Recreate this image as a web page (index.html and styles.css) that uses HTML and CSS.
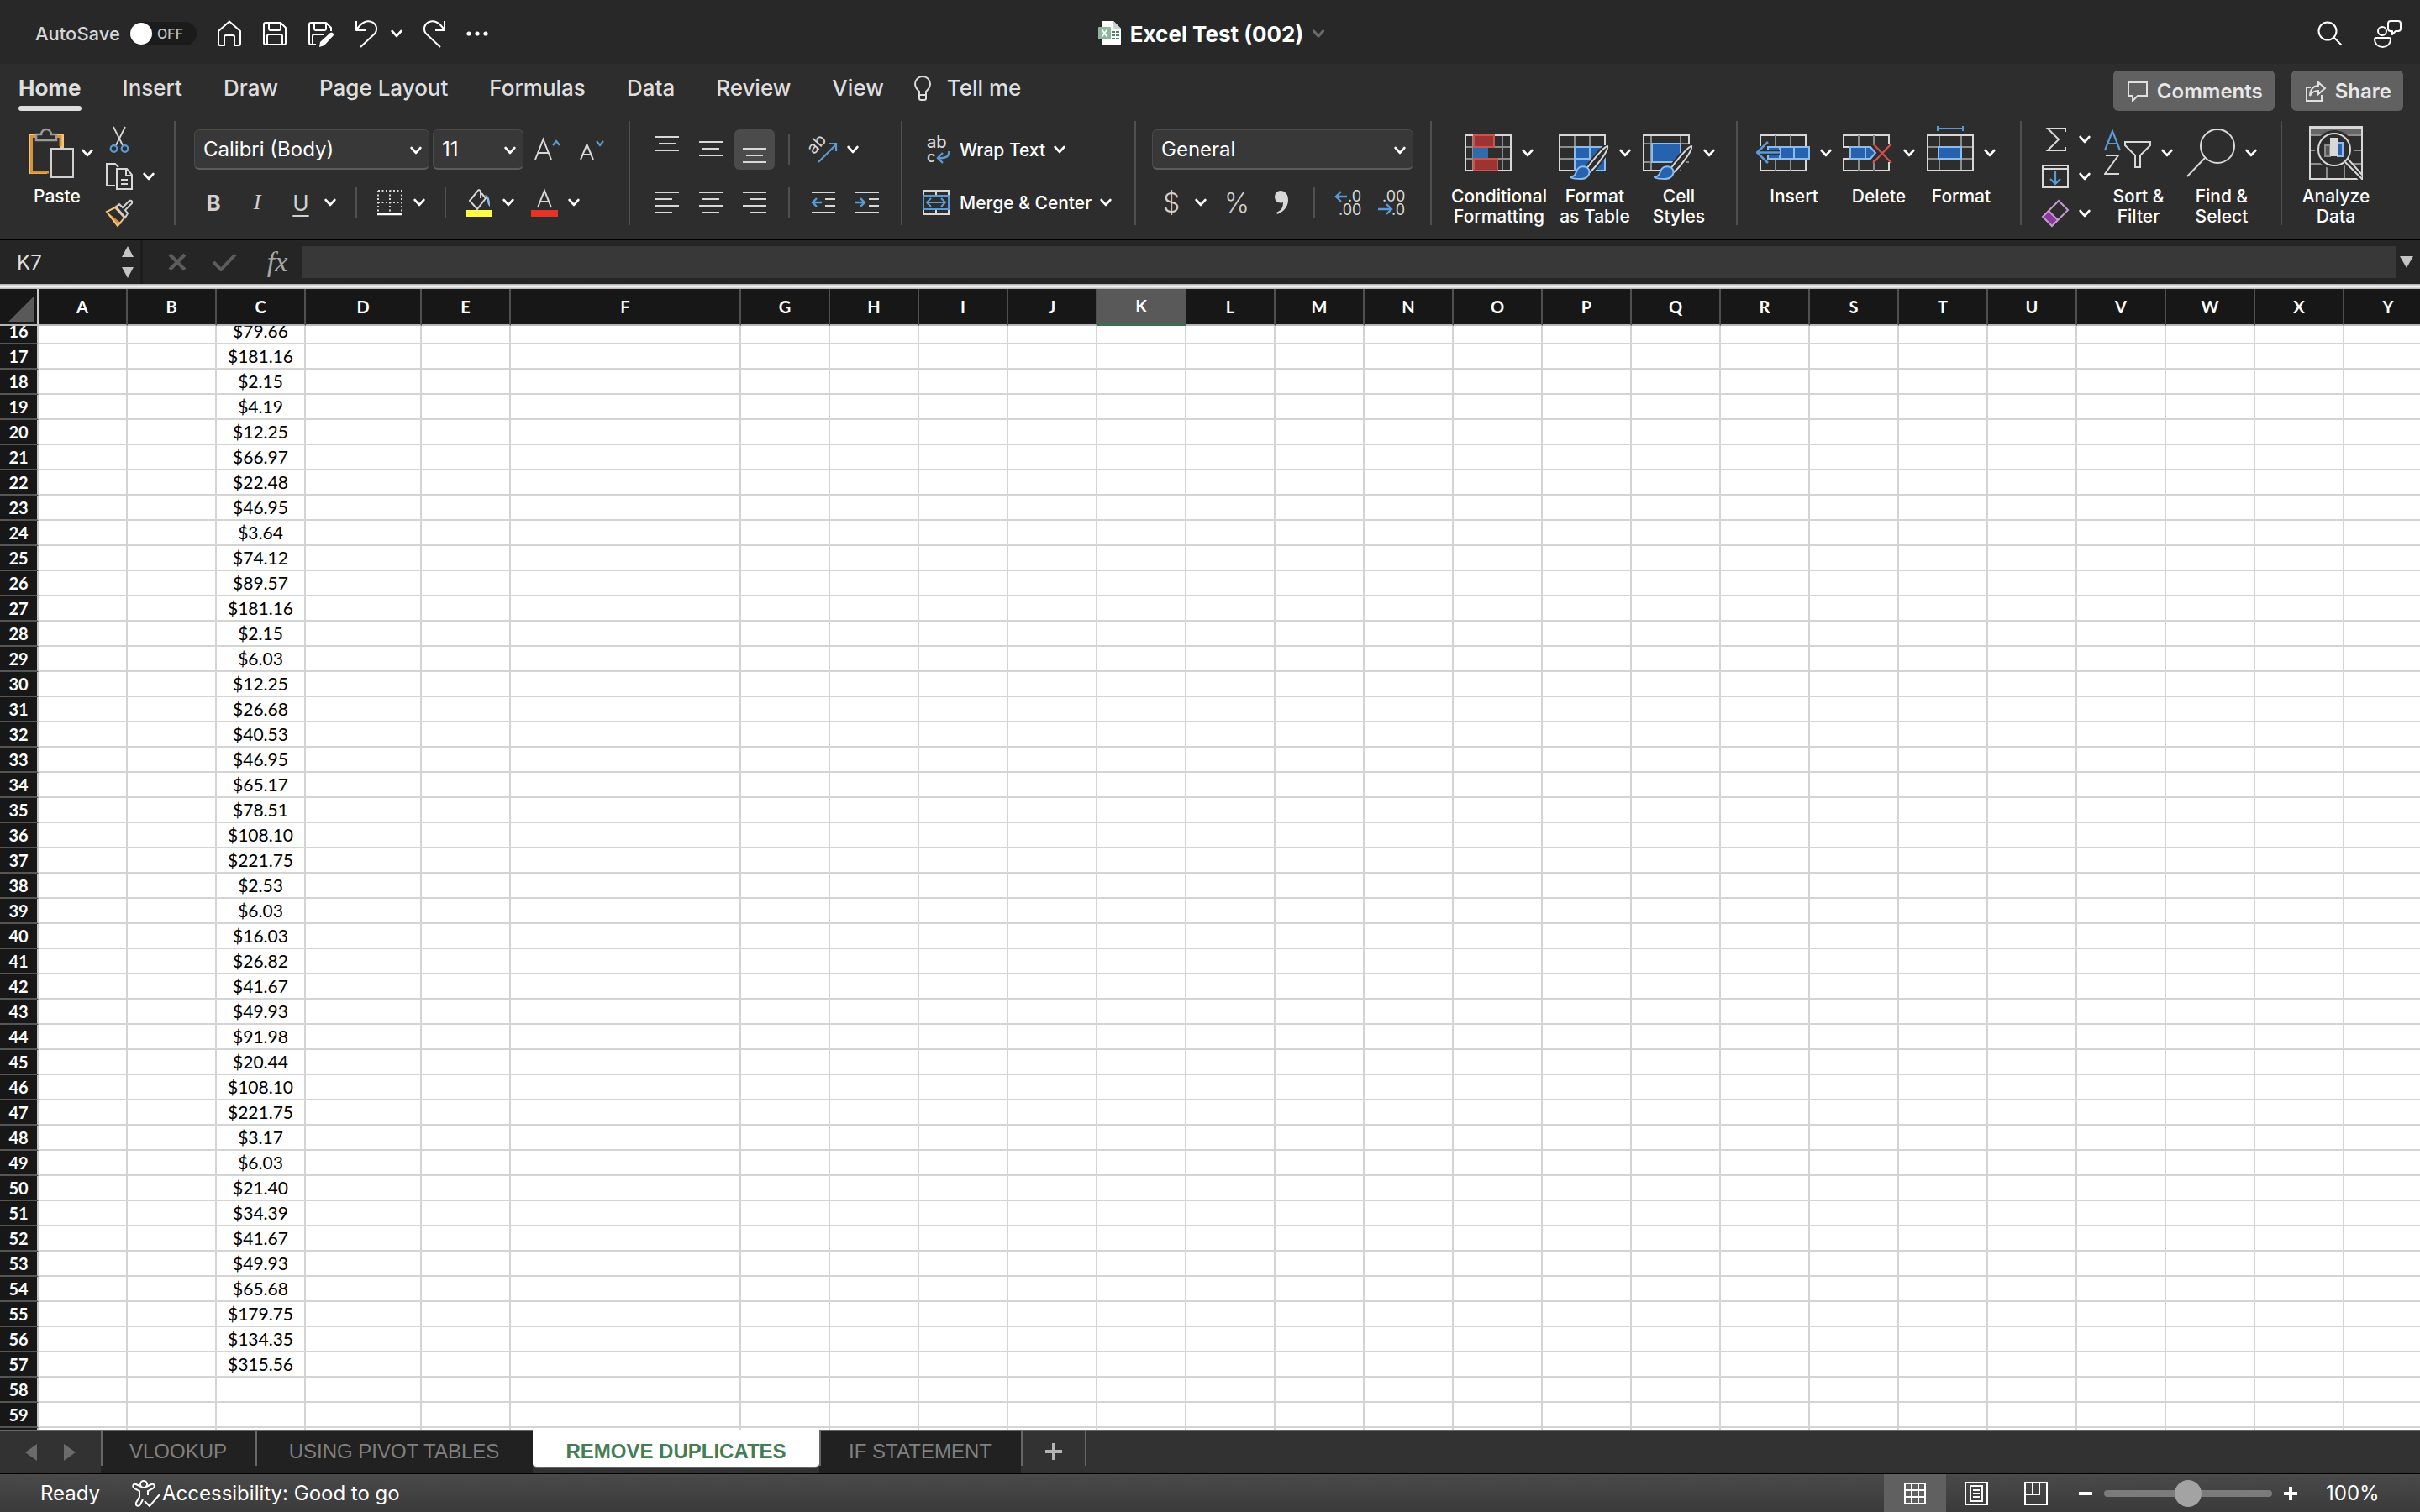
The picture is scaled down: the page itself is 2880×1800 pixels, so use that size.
FILE: index.html
```html
<!DOCTYPE html>
<html lang="en">
<head>
    <meta charset="UTF-8">
    <meta name="viewport" content="width=device-width, initial-scale=1.0">
    <title>Excel Test (002)</title>
    <link rel="stylesheet" href="styles.css">
</head>
<body>
    <!-- Shared shapes -->
    <svg class="defs" aria-hidden="true">
        <symbol id="chev" viewBox="0 0 12 8"><path d="M1.5 1.5 6 6.5l4.500-5" fill="none" stroke="currentColor" stroke-width="2.400" stroke-linecap="round" stroke-linejoin="round"/></symbol>
        <symbol id="paintbrush" viewBox="0 0 48 42">
            <path d="M45 1c-4 0-20 20-25 27l4 4C31 26 47 6 45 1z" fill="#2d2d2d" stroke="#2d2d2d" stroke-width="6"/>
            <path d="M45 1c-4 0-20 20-25 27l4 4C31 26 47 6 45 1z" fill="#2d2d2d" stroke="#d8d8d8" stroke-width="2"/>
            <path d="M1 38c6-1 6-5 8-9 3-5 11-5 14 0 2 6-3 11-9 11-5 0-10 0-13-2z" fill="#2662b0" stroke="#8cbcea" stroke-width="2"/>
        </symbol>
    </svg>

    <header class="titlebar">
        <div class="quick">
            <label class="autosave" for="autosave">AutoSave</label>
            <span class="toggle"><input type="checkbox" id="autosave"><span>OFF</span></span>
            <button class="qbtn" aria-label="Home"><svg width="30" height="32" viewBox="0 0 30 32"><path d="M2 13 15 1.500 28 13v15q0 2-2 2h-5V20q0-2-2-2h-8q-2 0-2 2v10H4q-2 0-2-2z"/></svg></button>
            <button class="qbtn" aria-label="Save"><svg width="30" height="32" viewBox="0 0 30 32"><path d="M4 3h18l6 6v18q0 2-2 2H4q-2 0-2-2V5q0-2 2-2zM8 3v7q0 2 2 2h10q2 0 2-2V3M6 29V19q0-2 2-2h14q2 0 2 2v10"/></svg></button>
            <button class="qbtn" aria-label="Save As"><svg width="32" height="32" viewBox="0 0 32 32"><path d="M10 29H4q-2 0-2-2V5q0-2 2-2h18l6 6v4M8 3v7q0 2 2 2h10q2 0 2-2V3M6 29V19q0-2 2-2h12"/><path d="M27 15q4-1 4 3L20 30l-6 2 1-6z" fill="#fff" stroke="none"/></svg></button>
            <span class="undo">
                <button class="qbtn" aria-label="Undo"><svg width="28" height="34" viewBox="0 0 28 34"><path d="M2 2v11h11M2 13C8 3 15 1 20 3c6 2 8 9 4 14L7 33"/></svg></button>
                <button class="qbtn" aria-label="Undo list"><svg width="14" height="10"><use href="#chev"/></svg></button>
            </span>
            <button class="qbtn" aria-label="Redo"><svg width="28" height="34" viewBox="0 0 28 34"><path d="M26 2v11H15M26 13C20 3 13 1 8 3 2 5 0 12 4 17l17 16"/></svg></button>
            <button class="qbtn" aria-label="More"><svg width="26" height="8" viewBox="0 0 26 8"><g fill="#fff" stroke="none"><circle cx="3" cy="4" r="2.600"/><circle cx="13" cy="4" r="2.600"/><circle cx="23" cy="4" r="2.600"/></g></svg></button>
        </div>
        <div class="doc">
            <svg width="28" height="32" viewBox="0 0 28 32">
                <path d="M4 1h14l9 9v20H4z" fill="#fff"/><path d="M18 1v9h9z" fill="#cfd3d0"/>
                <path d="M16 13h4v2h-4zm5 0h4v2h-4zm-5 4h4v2h-4zm5 0h4v2h-4zm-5 4h4v2h-4zm5 0h4v2h-4z" fill="#4f8563"/>
                <rect x="0" y="8" width="15" height="15" rx="1" fill="#8db79a"/><path d="m4.500 11.500 6 8m0-8-6 8" stroke="#fff" stroke-width="2"/>
            </svg>
            <h1>Excel Test (002)</h1>
            <svg class="dim" width="16" height="10"><use href="#chev"/></svg>
        </div>
        <div class="title-right">
            <button class="qbtn" aria-label="Search"><svg width="30" height="30" viewBox="0 0 30 30"><circle cx="12" cy="12" r="10.500"/><path d="m19.500 19.500 9 9"/></svg></button>
            <button class="qbtn" aria-label="Account"><svg width="34" height="34" viewBox="0 0 34 34"><circle cx="11" cy="14" r="5"/><path d="M4 22h15q2 0 2 2c0 5-4 9-9.500 9S2 29 2 24q0-2 2-2zM21 2h9q3 0 3 3v6q0 3-3 3h-3l-4 4v-4h-2q-3 0-3-3V5q0-3 3-3z"/></svg></button>
        </div>
    </header>

    <nav class="tabs">
        <a class="active" href="#home">Home</a>
        <a href="#insert">Insert</a>
        <a href="#draw">Draw</a>
        <a href="#layout">Page Layout</a>
        <a href="#formulas">Formulas</a>
        <a href="#data">Data</a>
        <a href="#review">Review</a>
        <a href="#view">View</a>
        <a class="tell" href="#tell"><svg width="22" height="32" viewBox="0 0 22 32" fill="none" stroke="#ddd" stroke-width="2"><path d="M7 24v-4C4 17 2 15 2 11a9 9 0 0 1 18 0c0 4-2 6-5 9v4zM7 24v4q0 2 2 2h4q2 0 2-2v-4"/></svg>Tell me</a>
        <div class="tab-actions">
            <button><svg width="26" height="26" viewBox="0 0 26 26"><path d="M2 2h22v16H13l-6 6v-6H2z"/></svg>Comments</button>
            <button><svg width="26" height="26" viewBox="0 0 26 26"><path d="M7 8H2v16h18v-7M16 2l8 7-8 7v-4c-5 0-8 2-10 6 0-7 4-12 10-12z"/></svg>Share</button>
        </div>
    </nav>

    <section class="ribbon">
        <div class="group g-clip">
            <button class="big paste">
                <span class="pic"><svg width="54" height="60" viewBox="0 0 54 60"><path d="M22 53H2V10h38v14" fill="none" stroke="#f3c57c" stroke-width="4"/><path d="M24 53H3.500V10.500H38V22" fill="none" stroke="#d9923a" stroke-width="3"/><path d="M9 15V8h6c1-8 11-8 12 0h6v7z" fill="#2d2d2d" stroke="#9a9a9a" stroke-width="2.500"/><path d="M27 25h26v34H27z" fill="#2d2d2d" stroke="#d0d0d0" stroke-width="2"/></svg><svg class="chev"><use href="#chev"/></svg></span>
                <span class="label">Paste</span>
            </button>
            <div class="stack">
                <button aria-label="Cut"><svg class="ic" viewBox="0 0 32 32"><path d="m9 1 11 22M23 1 12 23" stroke="#d8d8d8" stroke-width="1.800"/><circle cx="9.500" cy="27" r="3.800" stroke="#5b9bd5" stroke-width="2.200"/><circle cx="22.500" cy="27" r="3.800" stroke="#5b9bd5" stroke-width="2.200"/></svg></button>
                <button aria-label="Copy"><svg class="ic" viewBox="0 0 32 32"><path d="M11 27H1V1h10l4 4M13 7h12l6 7v17H13zM24 7v8h7M18 20h8M18 25h8"/></svg><svg class="chev"><use href="#chev"/></svg></button>
                <button aria-label="Format Painter"><svg class="ic" viewBox="0 0 32 32"><path d="m2 15 17 13-6 3z" fill="#d9923a" stroke="none"/><path d="m11 9 11 12-8 10L1 14z" stroke="#f3c57c"/><path d="m12 8 4-3 4 4 8-8q4-1 3 3l-8 8 3 4-3 5z" stroke="#d0d0d0" fill="#2d2d2d"/></svg></button>
            </div>
        </div>

        <div class="group g-font rows">
            <div class="row tight">
                <span class="select s-font"><select aria-label="Font"><option>Calibri (Body)</option></select><svg class="chev"><use href="#chev"/></svg></span>
                <span class="select s-size"><select aria-label="Font size"><option>11</option></select><svg class="chev"><use href="#chev"/></svg></span>
                <button class="sq" aria-label="Grow font"><svg class="ic" viewBox="0 0 32 32"><path d="M2 28 11.500 4 21 28M5 20h13"/><path d="m23 11 4-5 4 5" stroke="#5b9bd5" stroke-width="2.200"/></svg></button>
                <button class="sq" aria-label="Shrink font"><svg class="ic" viewBox="0 0 32 32"><path d="M4 28 11.500 10 19 28M6 22h11"/><path d="m23 6 4 5 4-5" stroke="#5b9bd5" stroke-width="2.200"/></svg></button>
            </div>
            <div class="row inset">
                <button class="txt b">B</button>
                <button class="txt i">I</button>
                <button class="txt u"><span>U</span><svg class="chev"><use href="#chev"/></svg></button>
                <i class="sep"></i>
                <button aria-label="Borders"><svg class="ic" viewBox="0 0 32 32"><path d="M2 2h28M2 16h28M2 2v26M16 2v26M30 2v26" stroke-dasharray="2 2.500"/><path d="M1 30h30" stroke="#fff" stroke-width="2.500"/></svg><svg class="chev"><use href="#chev"/></svg></button>
                <i class="sep"></i>
                <button aria-label="Fill colour"><svg class="ic" viewBox="0 0 32 32"><path d="M18 11V3q-2-4-4 0L5 14l9 10 10-13-5-6"/><path d="M23 7c6 1 6 8 6 14-4-3-2-9-6-14z" fill="#8cbcea" stroke="none"/><path d="M0 25h32v8H0z" fill="#fffb45" stroke="none"/></svg><svg class="chev"><use href="#chev"/></svg></button>
                <button aria-label="Font colour"><svg class="ic" viewBox="0 0 32 32"><path d="m8 22 8-20 8 20M11 15h10"/><path d="M0 25h32v8H0z" fill="#e63323" stroke="none"/></svg><svg class="chev"><use href="#chev"/></svg></button>
            </div>
        </div>

        <div class="group g-align rows">
            <div class="row tight">
                <button class="sq" aria-label="Top align"><svg class="ic" viewBox="0 0 32 32"><path d="M2 1h28M6 9h20M2 17h28"/></svg></button>
                <button class="sq" aria-label="Middle align"><svg class="ic" viewBox="0 0 32 32"><path d="M2 7h28M6 15h20M2 23h28"/></svg></button>
                <button class="sq on" aria-label="Bottom align"><svg class="ic" viewBox="0 0 32 32"><path d="M2 15h28M6 23h20M2 31h28"/></svg></button>
                <i class="sep"></i>
                <button class="pad" aria-label="Orientation"><svg class="ic" viewBox="0 0 32 32"><text x="1" y="18" transform="rotate(-48 8 16)" font-size="20">ab</text><path d="m10 31 21-21M22 9h9v9" stroke="#5b9bd5" stroke-width="2.200"/></svg><svg class="chev"><use href="#chev"/></svg></button>
            </div>
            <div class="row tight">
                <button class="sq" aria-label="Align left"><svg class="ic" viewBox="0 0 32 32"><path d="M2 4h28M2 12h20M2 20h28M2 28h20"/></svg></button>
                <button class="sq" aria-label="Center"><svg class="ic" viewBox="0 0 32 32"><path d="M2 4h28M6 12h20M2 20h28M6 28h20"/></svg></button>
                <button class="sq" aria-label="Align right"><svg class="ic" viewBox="0 0 32 32"><path d="M2 4h28M10 12h20M2 20h28M10 28h20"/></svg></button>
                <i class="sep"></i>
                <button class="sq" aria-label="Decrease indent"><svg class="ic" viewBox="0 0 32 32"><path d="M2 4h28M18 12h12M18 20h12M2 28h28"/><path d="M14 16H3m5-5-5 5 5 5" stroke="#5b9bd5" stroke-width="2.400"/></svg></button>
                <button class="sq" aria-label="Increase indent"><svg class="ic" viewBox="0 0 32 32"><path d="M2 4h28M18 12h12M18 20h12M2 28h28"/><path d="M2 16h11m-5-5 5 5-5 5" stroke="#5b9bd5" stroke-width="2.400"/></svg></button>
            </div>
        </div>

        <div class="group g-wrap rows">
            <button class="wide"><svg class="ic" viewBox="0 0 32 32"><text x="5" y="14" font-size="20">ab</text><text x="5" y="31" font-size="18">c</text><path d="M31 18c1 6-3 9-13 8m6-6-6 6 6 6" stroke="#5b9bd5" stroke-width="2.400"/></svg>Wrap Text<svg class="chev"><use href="#chev"/></svg></button>
            <button class="wide"><svg class="ic" viewBox="0 0 32 32"><path d="M1 2h30v28H1zM16 2v6M16 24v6"/><path d="M1 8h30v16H1z" stroke="#5b9bd5" fill="#2d2d2d"/><path d="M6 16h20m-16-5-5 5 5 5m12-10 5 5-5 5" stroke="#5b9bd5"/></svg>Merge &amp; Center<svg class="chev"><use href="#chev"/></svg></button>
        </div>

        <div class="group g-num rows">
            <span class="select"><select aria-label="Number format"><option>General</option></select><svg class="chev"><use href="#chev"/></svg></span>
            <div class="row inset">
                <button class="txt cur"><span>$</span><svg class="chev"><use href="#chev"/></svg></button>
                <button class="txt cur">%</button>
                <button aria-label="Comma style"><svg class="ic" viewBox="0 0 32 32"><path d="M9 9a7 7 0 0 1 7-7c5 0 9 4 9 11 0 8-5 14-13 17l-1-2c5-2 8-5 8-12-6 2-10-2-10-7z" fill="#d8d8d8" stroke="none"/></svg></button>
                <i class="sep"></i>
                <button aria-label="Increase decimal"><svg class="ic" viewBox="0 0 32 32"><text x="16" y="15" font-size="18">.0</text><text x="5" y="31" font-size="18">.00</text><path d="M15 9H2m6-6-6 6 6 6" stroke="#5b9bd5" stroke-width="2.400"/></svg></button>
                <button aria-label="Decrease decimal"><svg class="ic" viewBox="0 0 32 32"><text x="5" y="15" font-size="18">.00</text><text x="16" y="31" font-size="18">.0</text><path d="M0 24h16m-6-6 6 6-6 6" stroke="#5b9bd5" stroke-width="2.400"/></svg></button>
            </div>
        </div>

        <div class="group g-styles">
            <button class="big">
                <span class="pic"><svg width="56" height="44" viewBox="0 0 56 44"><path d="M1 15h54M1 29h54M10 1v42M45 1v42" stroke="#8c8c8c" stroke-width="2"/><path d="M1 1h54v42H1z" stroke="#d8d8d8"/><path d="M11 1h24v14H11zM11 29h28v14H11z" fill="#9c3532" stroke="#d0514c"/><path d="M10 16h18v12H10z" fill="#2f6cad" stroke="none"/><path d="M28 16h16v12H28z" fill="#2d2d2d" stroke="none"/></svg><svg class="chev"><use href="#chev"/></svg></span>
                <span class="label">Conditional<br>Formatting</span>
            </button>
            <button class="big">
                <span class="pic"><svg width="60" height="64" viewBox="0 0 60 64"><path d="M1 25h54M1 39h54M19 11v42M37 11v42" stroke="#8c8c8c" stroke-width="2"/><path d="M1 11h54v42H1z" stroke="#d8d8d8"/><path d="M19 25h36v28H19z" fill="#2662b0" stroke="#8cbcea"/><path d="M19 39h36M37 25v28" stroke="#8cbcea"/><use href="#paintbrush" x="13" y="23" width="48" height="42"/></svg><svg class="chev"><use href="#chev"/></svg></span>
                <span class="label">Format<br>as Table</span>
            </button>
            <button class="big">
                <span class="pic"><svg width="60" height="64" viewBox="0 0 60 64"><path d="M1 21h54M1 43h54M10 11v42M45 11v42" stroke="#8c8c8c" stroke-width="2"/><path d="M55 22V11H1v42h24" stroke="#d8d8d8"/><path d="M11 21h34v22H11z" fill="#2662b0" stroke="#8cbcea"/><use href="#paintbrush" x="13" y="23" width="48" height="42"/></svg><svg class="chev"><use href="#chev"/></svg></span>
                <span class="label">Cell<br>Styles</span>
            </button>
        </div>

        <div class="group g-cells">
            <button class="big">
                <span class="pic"><svg width="64" height="44" viewBox="0 0 64 44"><path d="M5 14V1h54v13M5 30v13h54V30" stroke="#d8d8d8"/><path d="M23 1v42M41 1v42" stroke="#8c8c8c"/><path d="M14 15h49v14H14z" fill="#2662b0" stroke="#8cbcea"/><path d="M28 15v14M45 15v14" stroke="#8cbcea"/><path d="M28 19H8v5h20z" fill="#2d2d2d" stroke="none"/><path d="M28 21.500H2M14 9 1 21.500 14 34" stroke="#5b9bd5" stroke-width="2.600"/></svg><svg class="chev"><use href="#chev"/></svg></span>
                <span class="label">Insert</span>
            </button>
            <button class="big">
                <span class="pic"><svg width="60" height="44" viewBox="0 0 60 44"><path d="M10 15H1V1h54v10M10 29H1v14h54V33" stroke="#d8d8d8"/><path d="M19 1v14M37 1v12M19 29v14M37 31v12" stroke="#8c8c8c"/><path d="M9 15h24l6 7-6 7H9z" fill="#2662b0" stroke="#8cbcea"/><path d="M27 15v14" stroke="#8cbcea"/><path d="m36 11 22 23M58 11 36 34" stroke="#d0514c" stroke-width="2.400"/></svg><svg class="chev"><use href="#chev"/></svg></span>
                <span class="label">Delete</span>
            </button>
            <button class="big">
                <span class="pic"><svg width="56" height="64" viewBox="0 0 56 64"><path d="M13 3h30M13 0v6M43 0v6" stroke="#5b9bd5"/><path d="M1 25h54M1 39h54M15 11v42M41 11v42" stroke="#8c8c8c"/><path d="M1 11h54v42H1z" stroke="#d8d8d8"/><path d="M14 25h27v14H14z" fill="#2662b0" stroke="#8cbcea"/></svg><svg class="chev"><use href="#chev"/></svg></span>
                <span class="label">Format</span>
            </button>
        </div>

        <div class="group g-edit">
            <div class="stack">
                <button aria-label="AutoSum"><svg class="ic" viewBox="0 0 32 32"><path d="M28 7V3H7l13 13L7 29h21v-4"/></svg><svg class="chev"><use href="#chev"/></svg></button>
                <button aria-label="Fill"><svg class="ic" viewBox="0 0 32 32"><path d="M1 3h30v26H1zM1 7h30"/><path d="M16 10v15m-6-6 6 6 6-6" stroke="#5b9bd5" stroke-width="2.200"/></svg><svg class="chev"><use href="#chev"/></svg></button>
                <button aria-label="Clear"><svg class="ic" viewBox="0 0 32 32"><path d="m8 13 11 11-7 7L1 21z" fill="#8a3a9c" stroke="none"/><path d="M20 1 31 12 12 31 1 20zM8 13l11 11" stroke="#c79ad2"/></svg><svg class="chev"><use href="#chev"/></svg></button>
            </div>
            <button class="big">
                <span class="pic"><svg width="56" height="56" viewBox="0 0 56 56"><path d="m1 25 9-23 9 23M4 17h12" stroke="#5b9bd5" stroke-width="2.200"/><path d="M2 31h15L1 53h17M25 15h30v4L43 31v14h-6V31L25 19z"/></svg><svg class="chev"><use href="#chev"/></svg></span>
                <span class="label">Sort &amp;<br>Filter</span>
            </button>
            <button class="big">
                <span class="pic"><svg width="58" height="60" viewBox="0 0 58 60"><circle cx="37" cy="22" r="20"/><path d="M22 36 1 58"/></svg><svg class="chev"><use href="#chev"/></svg></span>
                <span class="label">Find &amp;<br>Select</span>
            </button>
        </div>

        <div class="group g-analyze">
            <button class="big">
                <span class="pic"><svg width="64" height="64" viewBox="0 0 64 64"><path d="M1 2h62v8H1z" fill="#666"/><path d="M1 11h62M1 29h62M1 45h62M21 45v18M42 45v18" stroke="#8c8c8c"/><path d="M1 1h62v62H1z" stroke="#d8d8d8"/><circle cx="30" cy="28" r="23" fill="#2d2d2d" stroke="none"/><path d="m44 42 19 21" stroke="#2d2d2d" stroke-width="8"/><circle cx="30" cy="28" r="19" stroke="#d8d8d8"/><path d="m43 43 20 20 1-4-18-20" stroke="#d8d8d8"/><path d="M19 23h6v13h-6z" fill="#555" stroke="#8c8c8c"/><path d="M34 20h6v16h-6z" fill="#2662b0" stroke="#8cbcea"/><path d="M25 14h9v22h-9z" fill="#d8d8d8" stroke="none"/></svg></span>
                <span class="label">Analyze<br>Data</span>
            </button>
        </div>
    </section>

    <section class="formula">
        <div class="namebox">
            <input type="text" value="K7" aria-label="Name box">
            <svg width="16" height="38" viewBox="0 0 16 38" fill="#c4c4c4"><path d="M1 13 8 0l7 13zM1 25l7 13 7-13z"/></svg>
        </div>
        <button aria-label="Cancel"><svg width="22" height="22" viewBox="0 0 22 22"><path d="m2 2 18 18M20 2 2 20"/></svg></button>
        <button aria-label="Enter"><svg width="30" height="22" viewBox="0 0 30 22"><path d="m2 11 9 9L28 2"/></svg></button>
        <button class="fx" aria-label="Insert function">fx</button>
        <input class="entry" type="text" aria-label="Formula">
        <button class="expand" aria-label="Expand"><svg width="16" height="14" viewBox="0 0 16 14"><path d="M0 0h16L8 14z" fill="#c4c4c4" stroke="none"/></svg></button>
    </section>

    <main class="sheet" id="sheet">
        <table>
            <colgroup id="cols"></colgroup>
            <thead><tr id="letters"></tr></thead>
            <tbody id="rows"></tbody>
        </table>
    </main>

    <nav class="sheets">
        <div class="arrows">
            <button aria-label="Previous sheet"><svg width="14" height="20"><path d="M14 0v20L0 10z" fill="#6b6b6b"/></svg></button>
            <button aria-label="Next sheet"><svg width="14" height="20"><path d="M0 0v20l14-10z" fill="#6b6b6b"/></svg></button>
        </div>
        <a class="t1" href="#vlookup">VLOOKUP</a>
        <a class="t2" href="#pivot">USING PIVOT TABLES</a>
        <a class="t3 active" href="#duplicates">REMOVE DUPLICATES</a>
        <a class="t4" href="#if">IF STATEMENT</a>
        <button class="add" aria-label="Add sheet"><svg width="20" height="20"><path d="M10 0v20M0 10h20" stroke="#b4b4b4" stroke-width="4"/></svg></button>
    </nav>

    <footer class="status">
        <span class="ready">Ready</span>
        <svg width="34" height="32" viewBox="0 0 34 32" fill="none" stroke="#fff" stroke-width="2"><circle cx="14" cy="5" r="4"/><path d="M11 8 5 5c-4-1-5 3-2 5l6 3v7L5 27c-1 4 3 5 5 2l3-6M17 8l6-3c4-1 5 3 2 5l-6 3v5M15 25l6 6L33 17"/></svg>
        <span>Accessibility: Good to go</span>
        <div class="views">
            <button class="on" aria-label="Normal view"><svg width="28" height="28"><path d="M2 2h24v24H2zM10 2v24M18 2v24M2 10h24M2 18h24"/></svg></button>
            <button aria-label="Page layout view"><svg width="28" height="28"><path d="M1 1h26v26H1zM7 5h14v18H7zM10 10h8M10 14h8M10 18h8"/></svg></button>
            <button aria-label="Page break view"><svg width="28" height="28"><path d="M1 1h26v26H1zM1 15h17V1M10 1v14"/></svg></button>
        </div>
        <button class="zoom" aria-label="Zoom out"><svg width="16" height="16"><path d="M0 8h16"/></svg></button>
        <input type="range" min="0" max="100" value="50" aria-label="Zoom">
        <button class="zoom" aria-label="Zoom in"><svg width="16" height="16"><path d="M0 8h16M8 0v16"/></svg></button>
        <span class="percent">100%</span>
    </footer>
    <script src="script.js"></script>
</body>
</html>
```

FILE: styles.css
```css
/* Global styles */
* {
    box-sizing: border-box;
}
body {
    margin: 0;
    height: 100vh;
    display: flex;
    flex-direction: column;
    overflow: hidden;
    background: #2d2d2d;
    color: #fff;
    font-family: Inter, "Liberation Sans", sans-serif;
    font-size: 24px;
}
button, input, select {
    font: inherit;
    color: inherit;
    background: none;
    border: 0;
    padding: 0;
    margin: 0;
}
a {
    color: inherit;
    text-decoration: none;
}
svg {
    display: block;
    flex: none;
}
.defs {
    position: absolute;
    width: 0;
    height: 0;
}

/* Title bar */
.titlebar {
    display: grid;
    grid-template-columns: 1fr auto 1fr;
    align-items: center;
    height: 76px;
    padding: 4px 22px 0 42px;
    background: #282828;
}
.quick, .doc, .title-right, .undo {
    display: flex;
    align-items: center;
}
.quick {
    gap: 24px;
}
.autosave {
    width: 100px;
    margin-right: -12px;
    font-size: 22px;
    font-weight: 500;
    color: #d6d6d6;
}
.toggle {
    display: flex;
    align-items: center;
    gap: 6px;
    width: 80px;
    height: 28px;
    padding-left: 1px;
    border-radius: 14px;
    background: #1b1b1b;
    font-size: 16px;
    font-weight: 500;
    color: #c4c4c4;
}
.toggle input {
    appearance: none;
    width: 26px;
    height: 26px;
    border-radius: 13px;
    background: #fff;
}
.qbtn svg {
    fill: none;
    stroke: #fff;
    stroke-width: 2;
    stroke-linejoin: round;
}
.undo {
    gap: 15px;
}
.doc {
    gap: 10px;
    padding-right: 16px;
}
.doc h1 {
    margin: 0;
    font-size: 26px;
    font-weight: 700;
}
.dim {
    color: #6a6a6a;
}
.title-right {
    justify-content: flex-end;
    gap: 36px;
}

/* Ribbon tabs */
.tabs {
    display: flex;
    gap: 49px;
    height: 56px;
    padding: 0 20px 0 22px;
    font-size: 26px;
    font-weight: 500;
    color: #dedede;
}
.tabs a {
    padding: 13px 0 5px;
    line-height: 32px;
    border-bottom: 6px solid transparent;
    white-space: nowrap;
}
.tabs a.active {
    font-weight: 700;
    position: relative;
}
.tabs a.active::after {
    content: '';
    position: absolute;
    left: 0;
    right: 0;
    bottom: -6px;
    height: 6px;
    border-radius: 3px;
    background: #dedede;
}
.tabs .tell {
    display: flex;
    gap: 18px;
    margin-left: -14px;
}
.tab-actions {
    display: flex;
    align-items: flex-end;
    gap: 20px;
    margin-left: auto;
}
.tab-actions button {
    display: flex;
    align-items: center;
    gap: 10px;
    height: 48px;
    padding: 0 14px 0 16px;
    border-radius: 6px;
    border-top: 1px solid #757575;
    background: #616161;
    color: #e8e8e8;
    font-size: 24px;
    font-weight: 600;
}
.tab-actions svg {
    fill: none;
    stroke: #e0e0e0;
    stroke-width: 2;
}

/* Ribbon */
.ribbon {
    display: flex;
    height: 154px;
    padding-top: 12px;
    border-bottom: 2px solid #000;
}
.group {
    display: flex;
    flex: none;
    align-items: flex-start;
    height: 124px;
    border-right: 2px solid #505050;
}
.rows {
    flex-direction: column;
    gap: 15px;
    padding-top: 10px;
}
.row {
    display: flex;
    align-items: center;
    height: 48px;
    gap: 20px;
}
.row.tight {
    gap: 4px;
}
.row.inset {
    padding-left: 7px;
}
.group button {
    display: flex;
    align-items: center;
    gap: 12px;
}
.ic {
    width: 32px;
    height: 32px;
    overflow: visible;
}
.group svg {
    fill: none;
    stroke: #d8d8d8;
    stroke-width: 2;
}
.group text {
    fill: #d8d8d8;
    stroke: none;
}
.group .chev {
    width: 14px;
    height: 10px;
    color: #fff;
}
.sep {
    width: 2px;
    height: 36px;
    margin: 0 3px;
    background: #505050;
}
.tight .sep {
    margin: 0 12px;
}
.group .sq {
    width: 48px;
    height: 48px;
    justify-content: center;
    border-radius: 6px;
}
.group .on {
    background: #4b4b4b;
}
.group .pad {
    padding-left: 8px;
}
.select {
    position: relative;
    display: flex;
    height: 48px;
}
.select select {
    appearance: none;
    width: 100%;
    padding: 0 10px;
    border: 1px solid #4a4a4a;
    border-bottom: 2px solid #5c5c5c;
    border-radius: 6px;
    background: #383838;
}
.select .chev {
    position: absolute;
    right: 9px;
    top: 20px;
}
.s-font {
    width: 280px;
}
.s-size {
    width: 108px;
}
.txt {
    min-width: 32px;
    justify-content: center;
    font-size: 26px;
    color: #d0d0d0;
}
.txt span {
    width: 32px;
    text-align: center;
}
.b {
    font-weight: 700;
}
.i {
    font-family: "Liberation Serif", serif;
    font-style: italic;
}
.u span {
    text-decoration: underline;
    text-underline-offset: 5px;
    text-decoration-thickness: 2px;
}
.cur {
    font-size: 32px;
    font-weight: 300;
}
.group .wide {
    height: 48px;
    gap: 12px;
    font-size: 21px;
    font-weight: 500;
    white-space: nowrap;
}
.wide .chev {
    margin-left: -2px;
}
.group .big {
    flex-direction: column;
    gap: 8px;
    padding-top: 6px;
    min-width: 84px;
}
.pic {
    display: flex;
    align-items: center;
    justify-content: center;
    gap: 12px;
    height: 64px;
}
.label {
    line-height: 24px;
    font-size: 21px;
    font-weight: 500;
    text-align: center;
    white-space: nowrap;
}
.stack button {
    height: 44px;
}
.group .paste {
    align-items: flex-start;
    min-width: 76px;
}
.paste .pic {
    gap: 9px;
}
.paste .label {
    padding-left: 6px;
}
.g-clip {
    width: 209px;
    padding-left: 34px;
    gap: 15px;
}
.g-font {
    width: 541px;
    padding-left: 22px;
}
.g-align {
    width: 324px;
    padding-left: 20px;
}
.g-wrap {
    width: 278px;
    padding-left: 24px;
}
.g-num {
    width: 352px;
    padding: 10px 20px 0 19px;
}
.g-num .select {
    width: 100%;
}
.g-styles {
    width: 364px;
    padding-left: 23px;
    gap: 14px;
}
.g-cells {
    width: 338px;
    padding-left: 22px;
    gap: 13px;
}
.g-edit {
    width: 310px;
    padding-left: 24px;
    gap: 15px;
}
.g-analyze {
    padding-left: 22px;
    border: 0;
}

/* Formula bar, with the light rule under it */
.formula {
    display: flex;
    align-items: center;
    height: 58px;
    padding-bottom: 6px;
    background: linear-gradient(#a8a8a8, #fff 50%, #b0b0b0) left bottom / 100% 6px no-repeat #252525;
}
.namebox {
    display: flex;
    align-items: center;
    width: 170px;
    height: 52px;
    padding: 0 7px 0 20px;
    border-right: 3px solid #1c1c1c;
    color: #e0e0e0;
}
.namebox input {
    flex: 1;
    min-width: 0;
}
.formula button {
    margin-left: 30px;
}
.formula button svg {
    fill: none;
    stroke: #5c5c5c;
    stroke-width: 4;
}
.formula .fx {
    width: 36px;
    font-family: "Liberation Serif", serif;
    font-style: italic;
    font-size: 34px;
    line-height: 40px;
    color: #a8a8a8;
}
.formula .entry {
    flex: 1;
    height: 38px;
    margin-left: 12px;
    background: #383838;
}
.formula .expand {
    margin: 0 8px 0 5px;
}

/* Grid */
.sheet {
    flex: 1;
    min-height: 0;
    overflow: auto;
    scrollbar-width: none;
    background: #fff;
    color: #000;
    font-family: Lato, "Liberation Sans", sans-serif;
    font-size: 21px;
}
.sheet table {
    table-layout: fixed;
    width: 0;
    border-collapse: separate;
    border-spacing: 0;
}
.sheet th, .sheet td {
    padding: 0;
    overflow: hidden;
    text-align: center;
}
.sheet td {
    height: 30px;
    line-height: 28px;
    border-right: 2px solid #d4d4d4;
    border-bottom: 2px solid #d4d4d4;
}
.sheet th {
    background: #171717;
    color: #fff;
    font-size: 20px;
    font-weight: 700;
}
.sheet thead th {
    position: sticky;
    top: 0;
    height: 44px;
    border-right: 2px solid #4f4f4f;
    border-bottom: 2px solid #b8b8b8;
}
.sheet tbody th {
    border-right: 2px solid #c8c8c8;
    border-bottom: 2px solid #555;
}
.sheet thead .corner {
    border-right-color: #c8c8c8;
}
.corner svg {
    margin: 6px 0 0 10px;
}
.sheet thead .picked {
    background: #595959;
    border-right-color: #595959;
    border-bottom: 4px solid #3f6e4c;
}

/* Sheet tabs */
.sheets {
    display: flex;
    height: 53px;
    border-top: 2px solid #666;
    border-bottom: 1px solid #000;
    background: #323232;
    font-family: "Liberation Sans", Arial, sans-serif;
    font-size: 24px;
    color: #808080;
}
.arrows {
    display: flex;
    align-items: center;
    gap: 32px;
    width: 120px;
    padding-left: 30px;
}
.sheets a {
    display: flex;
    justify-content: center;
    padding-top: 10px;
    line-height: 28px;
    background: linear-gradient(#666, #666) left top / 2px 41px no-repeat #212121;
    white-space: nowrap;
}
.t1 {
    width: 184px;
}
.t2 {
    width: 330px;
}
.sheets .t3 {
    position: relative;
    width: 341px;
    height: 46px;
    margin-top: -2px;
    padding-top: 12px;
    border-bottom: 2px solid #666;
    border-radius: 0 0 5px 5px;
    background: #fff;
    color: #437c55;
    font-weight: 700;
}
.t4 {
    width: 240px;
}
.add {
    display: flex;
    align-items: center;
    justify-content: center;
    width: 78px;
    height: 41px;
    padding-top: 6px;
    border-left: 2px solid #666;
    border-right: 2px solid #666;
}

/* Status bar */
.status {
    display: flex;
    align-items: center;
    height: 45px;
    padding: 0 48px;
    background: linear-gradient(#4a4a4a, #3a3a3a);
}
.ready {
    width: 109px;
}
.status > svg + span {
    margin-left: 2px;
}
.views {
    display: flex;
    align-self: stretch;
    margin-left: auto;
}
.views button {
    display: flex;
    align-items: center;
    justify-content: center;
    width: 71px;
}
.views .on {
    width: 74px;
    background: #606060;
}
.status button svg {
    fill: none;
    stroke: #fff;
    stroke-width: 2;
}
.status .zoom svg {
    stroke-width: 4;
}
.zoom {
    margin-left: 14px;
}
.views + .zoom {
    margin-left: 16px;
}
.status input {
    appearance: none;
    width: 200px;
    height: 8px;
    margin-left: 14px;
    border-radius: 4px;
    background: #7b7b7b;
}
.status input::-webkit-slider-thumb {
    appearance: none;
    width: 32px;
    height: 32px;
    border-radius: 50%;
    background: #a3a3a3;
}
.percent {
    width: 64px;
    margin-left: 34px;
}
```

FILE: script.js
```js
// Column letters with their widths, first visible row is 16
const letters = 'ABCDEFGHIJKLMNOPQRSTUVWXY'.split('');
const widths = { D: 138, F: 274 };
const firstRow = 16;
const lastRow = 60;
const selected = 'K';

const amounts = [
    '$79.66', '$181.16', '$2.15', '$4.19', '$12.25', '$66.97', '$22.48', '$46.95', '$3.64', '$74.12', '$89.57',
    '$181.16', '$2.15', '$6.03', '$12.25', '$26.68', '$40.53', '$46.95', '$65.17', '$78.51', '$108.10', '$221.75',
    '$2.53', '$6.03', '$16.03', '$26.82', '$41.67', '$49.93', '$91.98', '$20.44', '$108.10', '$221.75',
    '$3.17', '$6.03', '$21.40', '$34.39', '$41.67', '$49.93', '$65.68', '$179.75', '$134.35', '$315.56'
];

let cols = '<col style="width:46px">';
let head = '<th class="corner"><svg width="30" height="30"><path d="M30 0v30H0z" fill="#595959"/></svg></th>';
letters.forEach(l => {
    cols += `<col style="width:${widths[l] || 106}px">`;
    head += `<th scope="col"${l === selected ? ' class="picked"' : ''}>${l}</th>`;
});
document.getElementById('cols').innerHTML = cols;
document.getElementById('letters').innerHTML = head;

let rows = '';
for (let r = firstRow; r <= lastRow; r++) {
    rows += `<tr><th scope="row">${r}</th>`;
    letters.forEach(l => {
        rows += `<td>${l === 'C' ? amounts[r - firstRow] || '' : ''}</td>`;
    });
    rows += '</tr>';
}
document.getElementById('rows').innerHTML = rows;

// Row 16 is partly scrolled under the header
document.getElementById('sheet').scrollTop = 8;
```
